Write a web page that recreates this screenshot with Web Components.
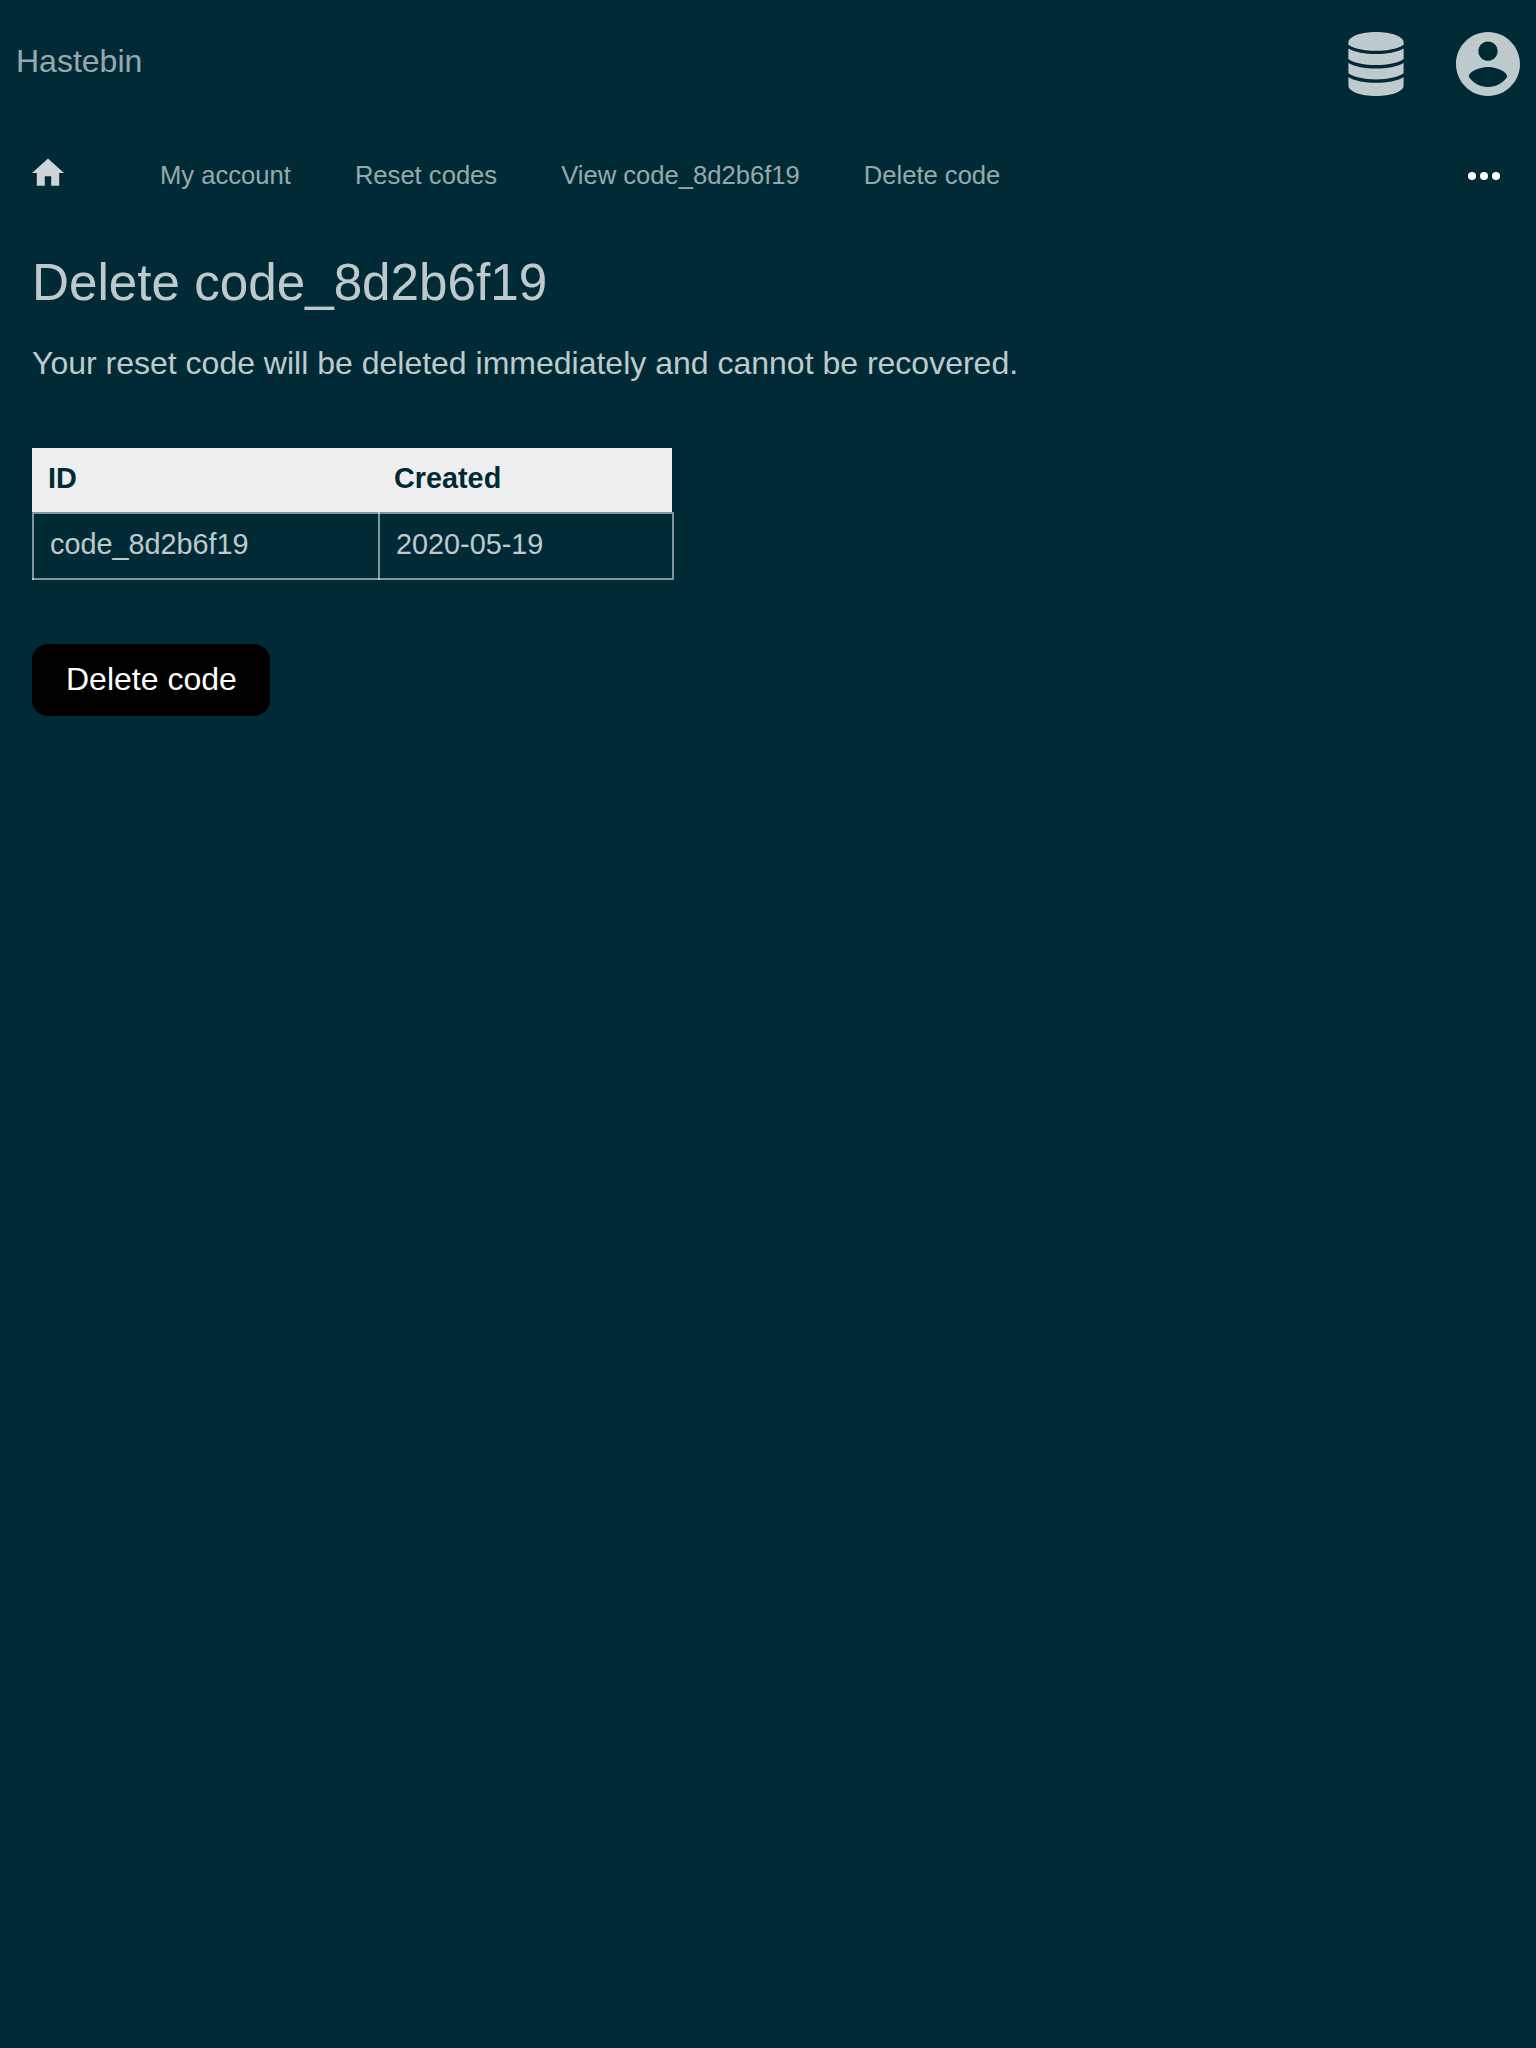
<!DOCTYPE html>
<html lang="en">
<head>
<meta charset="utf-8">
<title>Delete code_8d2b6f19</title>
<style>
html,body{margin:0;background:#002b36}
body{min-height:2048px;color:rgba(255,255,255,.75);font:32px/36px "Liberation Sans",Arial,sans-serif}
</style>
</head>
<body>
<hb-app></hb-app>
<script>
const define = (name, html) => {
  const t = document.createElement('template');
  t.innerHTML = html;
  customElements.define(name, class extends HTMLElement {
    constructor() {
      super();
      this.attachShadow({ mode: 'open' }).append(t.content.cloneNode(true));
    }
  });
};

define('hb-header', `<style>
:host{display:flex;justify-content:space-between;align-items:flex-start;height:128px;padding:32px 16px 0;box-sizing:border-box}
.brand{color:rgba(255,255,255,.6);line-height:36px;padding-top:11px}
.icons{display:flex;gap:52px}
svg{display:block;fill:#bfcacd}
</style>
<div class="brand"><slot></slot></div>
<div class="icons">
<svg width="56" height="64" viewBox="0 0 56 64"><g transform="translate(.4 0) scale(.986 1)"><path d="M28 0C43.500 0 56 4.600 56 10.500V12.700C50 16.700 39.500 18.800 28 18.800S6 16.700 0 12.700V10.500C0 4.600 12.500 0 28 0Z"/><path d="M0 16.600C6.500 20.300 16.500 22.100 28 22.100S49.500 20.300 56 16.600V27C50 31 39.500 33.100 28 33.100S6 31 0 27Z"/><path d="M0 30.900C6.500 34.600 16.500 36.400 28 36.400S49.500 34.600 56 30.900V41.300C50 45.300 39.500 47.400 28 47.400S6 45.300 0 41.300Z"/><path d="M0 45.200C6.500 48.900 16.500 50.700 28 50.700S49.500 48.900 56 45.200V53.500C56 59.400 43.500 64 28 64S0 59.400 0 53.500Z"/></g></svg>
<svg width="64" height="64" viewBox="2 2 20 20"><path d="M12 2C6.480 2 2 6.480 2 12s4.480 10 10 10 10-4.480 10-10S17.520 2 12 2zm0 3c1.660 0 3 1.340 3 3s-1.340 3-3 3-3-1.340-3-3 1.340-3 3-3zm0 14.200c-2.500 0-4.710-1.280-6-3.220.03-1.990 4-3.080 6-3.080 1.990 0 5.970 1.090 6 3.080-1.290 1.940-3.500 3.220-6 3.220z"/></svg>
</div>`);

define('hb-crumb', `<style>:host{display:block;white-space:nowrap}</style><slot></slot>`);

define('hb-nav', `<style>
:host{display:flex;align-items:flex-start;height:96px;padding:0 36px 0 32px;box-sizing:border-box;font-size:25.6px;line-height:30px;color:rgba(255,255,255,.6)}
svg{display:block}
.home{margin-top:30px;fill:#ccd5d7}
.items{display:flex;gap:64px;margin:32px auto 0 96px}
.more{margin-top:44px;fill:#fff}
</style>
<svg class="home" width="32" height="28" viewBox="0 0 32 28"><path transform="translate(-3.2 -4.2) scale(1.6)" d="M10 20v-6h4v6h5v-8h3L12 3 2 12h3v8z"/></svg>
<div class="items"><slot></slot></div>
<svg class="more" width="32" height="8"><circle cx="4" cy="4" r="4"/><circle cx="16" cy="4" r="4"/><circle cx="28" cy="4" r="4"/></svg>`);

define('hb-table', `<style>
:host{display:block;width:642px;font-size:28.800px;line-height:32px}
.head{display:grid;grid-template-columns:346px 294px;width:640px;height:64px;background:#eee;color:#002b36;font-weight:bold}
.head div{padding:14px 16px 0}
.row{--c:rgba(255,255,255,.5);--l:linear-gradient(var(--c),var(--c)) no-repeat;display:grid;grid-template-columns:346px 296px;height:68px;
background:var(--l) 0 0/100% 2px,var(--l) 0 100%/100% 2px,var(--l) 0 2px/2px 66px,var(--l) 346px 0/2px 68px,var(--l) 640px 2px/2px 64px}
.row div{padding:16px 18px 0}
</style>
<div class="head"><div><slot name="h1"></slot></div><div><slot name="h2"></slot></div></div>
<div class="row"><div><slot name="c1"></slot></div><div><slot name="c2"></slot></div></div>`);

define('hb-button', `<style>
:host{display:block}
button{display:block;width:238px;height:72px;padding:0 0 2px 34px;border:0;border-radius:16px;background:#000;color:#fff;font:inherit;text-align:left}
</style><button><slot></slot></button>`);

define('hb-app', `<style>
:host{display:block}
main{padding:0 32px}
h1{margin:29px 0 0;font-size:51.200px;line-height:60px;font-weight:normal}
p{margin:32px 0 0;line-height:36px}
hb-table{margin-top:67px}
hb-button{margin-top:64px}
</style>
<hb-header>Hastebin</hb-header>
<hb-nav><hb-crumb>My account</hb-crumb><hb-crumb>Reset codes</hb-crumb><hb-crumb>View code_8d2b6f19</hb-crumb><hb-crumb>Delete code</hb-crumb></hb-nav>
<main>
<h1>Delete code_8d2b6f19</h1>
<p>Your reset code will be deleted immediately and cannot be recovered.</p>
<hb-table><span slot="h1">ID</span><span slot="h2">Created</span><span slot="c1">code_8d2b6f19</span><span slot="c2">2020-05-19</span></hb-table>
<hb-button>Delete code</hb-button>
</main>`);
</script>
</body>
</html>
